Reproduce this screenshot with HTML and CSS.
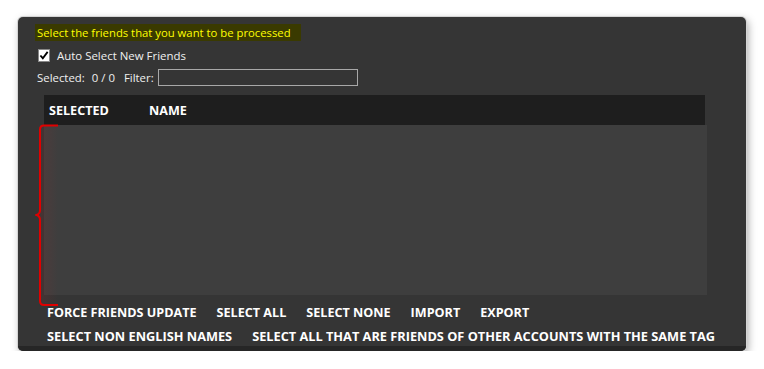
FILE: index.html
```html
<!DOCTYPE html>
<html lang="en">
<head>
    <meta charset="UTF-8">
    <title>Friends</title>
    <link rel="stylesheet" href="styles.css">
</head>
<body>
    <div class="window">
        <div class="title-row">
            <span class="title">Select the friends that you want to be processed</span>
        </div>
        <label class="auto-row">
            <span class="check">
                <svg width="11" height="11" viewBox="0 0 11 11"><path d="M1.5 5.5 L4.2 8.5 L9.5 1.5" fill="none" stroke="#000" stroke-width="2"/></svg>
            </span>
            Auto Select New Friends
        </label>
        <div class="filter-row">
            <span>Selected:</span>
            <span class="count">0 / 0</span>
            <span class="filter-label">Filter:</span>
            <input type="text" class="filter-input">
        </div>
        <div class="grid">
            <div class="grid-header">
                <span class="col-selected">SELECTED</span>
                <span class="col-name">NAME</span>
            </div>
            <div class="grid-body"></div>
            <div class="error-tint"></div>
            <svg class="error-brace" width="24" height="183" viewBox="0 0 24 183">
                <path d="M23 1.5 H9 Q5 1.5 5 5.5 V86 Q5 90 1.5 91 Q5 92 5 96 V177 Q5 181 9 181 H23" fill="none" stroke="#e00000" stroke-width="2"/>
            </svg>
        </div>
        <div class="actions first-row">
            <button>FORCE FRIENDS UPDATE</button>
            <button>SELECT ALL</button>
            <button>SELECT NONE</button>
            <button>IMPORT</button>
            <button>EXPORT</button>
        </div>
        <div class="actions second-row">
            <button>SELECT NON ENGLISH NAMES</button>
            <button>SELECT ALL THAT ARE FRIENDS OF OTHER ACCOUNTS WITH THE SAME TAG</button>
        </div>
        <div class="bottom-band"></div>
    </div>
</body>
</html>
```

FILE: styles.css
```css
body {
    margin: 0;
    background: #ffffff;
    font-family: 'Open Sans', 'Noto Sans', sans-serif;
}

.window {
    position: relative;
    margin: 17px 0 0 18px;
    width: 728px;
    height: 334px;
    background: #353535;
    border-radius: 5px;
    box-shadow: 0 0 0 1px #d4d4d4, 2px 3px 8px rgba(0, 0, 0, 0.35);
    overflow: hidden;
    display: flex;
    flex-direction: column;
    color: #f0f0f0;
}

.window > * {
    flex-shrink: 0;
}

.title-row {
    display: flex;
    height: 17px;
    margin-top: 7px;
    padding-left: 17px;
}

.title {
    box-sizing: border-box;
    width: 266px;
    height: 17px;
    line-height: 17px;
    padding-left: 2px;
    background: #3a3a00;
    color: #ffff00;
    font-size: 11.3px;
    white-space: nowrap;
}

.auto-row {
    display: flex;
    align-items: center;
    height: 14px;
    margin-top: 7px;
    padding-left: 20px;
    font-size: 11.45px;
}

.check {
    display: flex;
    align-items: center;
    justify-content: center;
    width: 12px;
    height: 13px;
    margin-right: 7px;
    background: #ffffff;
    border: 1px solid #888;
    box-sizing: border-box;
}

.filter-row {
    display: flex;
    align-items: center;
    height: 16px;
    margin-top: 7px;
    padding-left: 19px;
    font-size: 11.4px;
}

.count {
    margin-left: 7px;
}

.filter-label {
    margin-left: 9px;
    margin-right: 4px;
}

.filter-input {
    box-sizing: border-box;
    width: 200px;
    height: 17px;
    background: #353535;
    border: 1px solid #a8a8a8;
    outline: none;
}

.grid {
    position: relative;
    margin: 10px 0 0 26px;
    width: 663px;
}

.grid-header {
    display: flex;
    align-items: center;
    height: 30px;
    width: 661px;
    background: #1e1e1e;
    font-size: 12.6px;
    font-weight: bold;
    color: #ffffff;
}

.col-selected {
    width: 100px;
    padding-left: 5px;
}

.grid-body {
    height: 170px;
    background: #3e3e3e;
}

.error-tint {
    position: absolute;
    left: -4px;
    top: 30px;
    width: 18px;
    height: 180px;
    background: linear-gradient(to right, rgba(200, 40, 40, 0.12), rgba(200, 40, 40, 0));
}

.error-brace {
    position: absolute;
    left: -9px;
    top: 29px;
}

.actions {
    display: flex;
    gap: 20px;
    padding-left: 29px;
}

.first-row {
    height: 25px;
    margin-top: 5px;
    align-items: center;
}

.second-row {
    box-sizing: border-box;
    height: 21px;
    padding-top: 3px;
    align-items: flex-start;
}

.actions button {
    background: none;
    border: none;
    padding: 0;
    color: #ffffff;
    font-family: inherit;
    font-size: 12.75px;
    font-weight: bold;
    line-height: 17px;
    cursor: pointer;
}

.first-row button {
    font-size: 12.6px;
}

.bottom-band {
    margin-top: auto;
    height: 5px;
    background: #262626;
}
```
